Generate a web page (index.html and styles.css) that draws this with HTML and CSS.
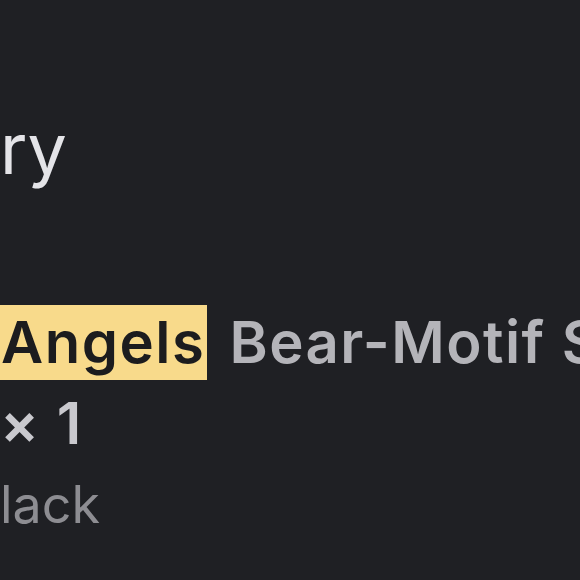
FILE: index.html
```html
<!DOCTYPE html>
<html lang="en">
<head>
<meta charset="utf-8">
<link rel="stylesheet" href="styles.css">
</head>
<body>
<main class="screen">
  <h1 class="title">ry</h1>
  <div class="item">
    <p class="name"><span class="hl">Angels</span> <span class="rest">Bear-Motif S</span></p>
    <p class="qty">× 1</p>
    <p class="variant">lack</p>
  </div>
</main>
</body>
</html>
```
FILE: styles.css
```css
html, body {
  margin: 0;
  padding: 0;
  background: #1f2024;
}
.screen {
  width: 580px;
  height: 580px;
  overflow: hidden;
  font-family: Inter, "Noto Sans", sans-serif;
  padding-top: 110px;
  box-sizing: border-box;
}
.title {
  margin: 0;
  font-size: 70px;
  line-height: 78px;
  font-weight: 400;
  color: #e4e4e8;
  white-space: nowrap;
}
.item {
  margin-top: 117px;
}
.name {
  margin: 0;
  font-size: 58px;
  line-height: 75px;
  font-weight: 600;
  letter-spacing: 1.5px;
  white-space: nowrap;
}
.hl {
  display: inline-block;
  background: #f8da8b;
  color: #1c1c1e;
  padding: 0 2px 0 1px;
}
.rest {
  color: #b4b4b9;
  margin-left: 6px;
}
.qty {
  margin: 6px 0 0;
  font-size: 58px;
  line-height: 75px;
  font-weight: 600;
  letter-spacing: 1.5px;
  color: #c9c9ce;
  white-space: nowrap;
}
.variant {
  margin: 6px 0 0;
  font-size: 52px;
  line-height: 75px;
  font-weight: 400;
  color: #8d8d92;
  white-space: nowrap;
}
```
